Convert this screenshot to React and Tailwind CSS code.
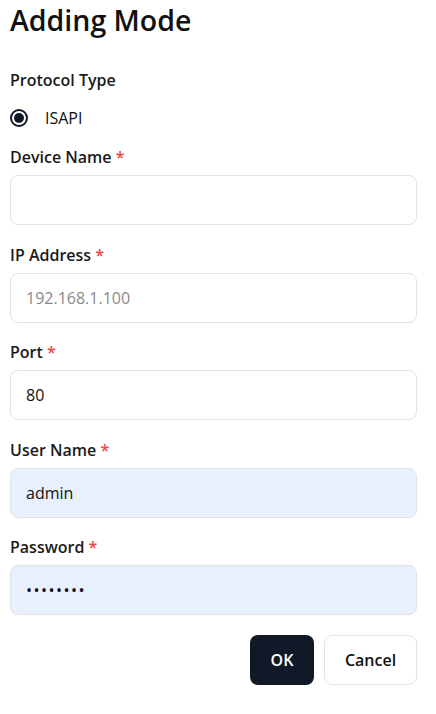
import React from "react";

function Field({ label, children }) {
  return (
    <div className="flex flex-col">
      <label className="text-[16px] font-semibold text-[#1a1a1a] leading-[20px] h-[20px] mb-[8px]">
        {label} <span className="text-[#ef4444]">*</span>
      </label>
      {children}
    </div>
  );
}

export default function App() {
  const inputBase =
    "w-full h-[50px] rounded-[8px] border border-[#e2e2e2] px-[15px] text-[16px] text-[#111] outline-none";
  return (
    <div
      className="w-[436px] h-[714px] bg-white px-[10px] pt-0"
      style={{ fontFamily: '"Open Sans", "Noto Sans", sans-serif' }}
    >
      <div className="w-[407px]">
        <h1 className="text-[28.5px] font-semibold text-[#111] leading-[38px] mt-[1px]">Adding Mode</h1>
        <div className="mt-[30px] text-[16px] font-semibold text-[#1a1a1a] leading-[22px]">Protocol Type</div>
        <div className="mt-[17px] flex items-center h-[20px]">
          <span className="w-[18px] h-[18px] rounded-full border-2 border-[#111827] flex items-center justify-center">
            <span className="w-[10px] h-[10px] rounded-full bg-[#111827]" />
          </span>
          <span className="ml-[17px] text-[16px] text-[#111]">ISAPI</span>
        </div>
        <div className="mt-[19px] flex flex-col gap-[19.5px]">
          <Field label="Device Name">
            <input className={inputBase + " bg-white"} />
          </Field>
          <Field label="IP Address">
            <input className={inputBase + " bg-white placeholder:text-[#8a8a8a]"} placeholder="192.168.1.100" />
          </Field>
          <Field label="Port">
            <input className={inputBase + " bg-white"} defaultValue="80" />
          </Field>
          <Field label="User Name">
            <input className={inputBase + " bg-[#e8f0fe]"} defaultValue="admin" />
          </Field>
          <Field label="Password">
            <input type="password" className={inputBase + " bg-[#e8f0fe] tracking-[1.5px]"} defaultValue="password" />
          </Field>
        </div>
        <div className="mt-[20px] flex justify-end gap-[10px]">
          <button className="h-[50px] w-[64px] rounded-[8px] bg-[#111827] text-white text-[16px] font-semibold">OK</button>
          <button className="h-[50px] w-[93px] rounded-[8px] border border-[#e2e2e2] bg-white text-[#111] text-[16px] font-semibold">Cancel</button>
        </div>
      </div>
    </div>
  );
}
